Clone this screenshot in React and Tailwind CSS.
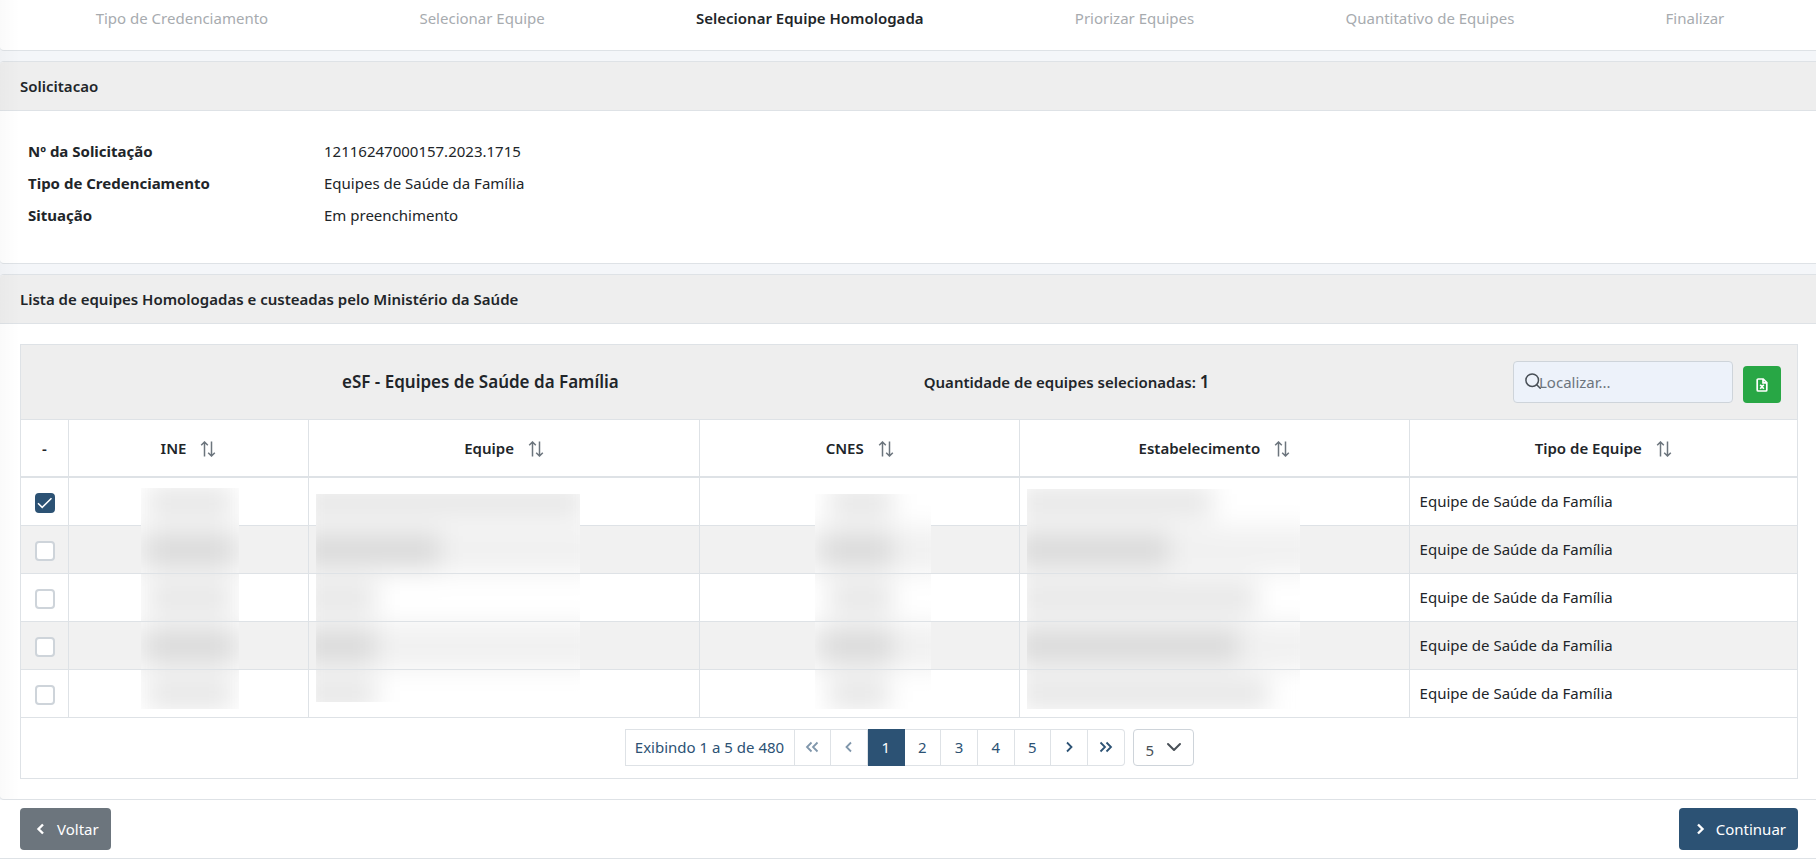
import React, { useState } from 'react';
import { ChevronDown } from 'lucide-react';

const steps = [
    'Tipo de Credenciamento',
    'Selecionar Equipe',
    'Selecionar Equipe Homologada',
    'Priorizar Equipes',
    'Quantitativo de Equipes',
    'Finalizar',
];

const details = [
    { label: 'Nº da Solicitação', value: '12116247000157.2023.1715' },
    { label: 'Tipo de Credenciamento', value: 'Equipes de Saúde da Família' },
    { label: 'Situação', value: 'Em preenchimento' },
];

const columns = ['INE', 'Equipe', 'CNES', 'Estabelecimento', 'Tipo de Equipe'];

const masks = [
    {
        box: 'left-[72px] top-[10px] w-[98px] h-[221px]',
        shift: '-top-[58px]',
        bars: ['ml-[26px] w-[86px]', 'ml-[26px] w-[86px]', 'ml-[26px] w-[86px]', 'ml-[26px] w-[86px]', 'ml-[26px] w-[86px]'],
    },
    {
        box: 'left-[7px] top-4 w-[264px] h-[208px]',
        shift: '-top-16',
        bars: ['ml-2 w-[280px]', 'ml-2 w-[136px]', 'ml-2 w-[72px]', 'ml-2 w-[72px]', 'ml-2 w-[72px]'],
    },
    {
        box: 'left-[115px] top-4 w-[116px] h-[215px]',
        shift: '-top-16',
        bars: ['ml-[34px] w-[64px]', 'ml-[28px] w-[70px]', 'ml-[34px] w-[64px]', 'ml-[28px] w-[70px]', 'ml-[34px] w-[60px]'],
    },
    {
        box: 'left-[7px] top-[11px] w-[273px] h-[220px]',
        shift: '-top-[59px]',
        bars: ['ml-3 w-[194px]', 'ml-3 w-[150px]', 'ml-3 w-[238px]', 'ml-3 w-[220px]', 'ml-3 w-[250px]'],
    },
];

const Mask = ({ box, shift, bars }) => (
    <div className={`absolute overflow-hidden bg-white ${box}`} aria-hidden="true">
        <div className={`absolute -left-5 -right-5 blur-[12px] ${shift}`}>
            <div className="h-12 bg-white" />
            {bars.map((bar, i) => (
                <div key={i} className="flex h-12 items-center bg-white odd:bg-[#f1f1f1]">
                    <div className={`flex h-12 items-center bg-black/[0.03] ${bar}`}>
                        <div className="h-5 w-full bg-black/[0.08]" />
                    </div>
                </div>
            ))}
            <div className="h-12 bg-white" />
        </div>
    </div>
);

const SortIcon = () => (
    <svg className="mt-0.5 h-4 w-4 text-[#6c757d]" viewBox="0 0 16 16" fill="none" stroke="currentColor" strokeWidth="1.5" aria-hidden="true">
        <path d="M4.5 15.5V1M1.2 4.3 4.5 1l3.3 3.3M11.5.5V15M8.2 11.7l3.3 3.3 3.3-3.3" />
    </svg>
);

const Chevron = ({ left, double, bold }) => (
    <svg
        className={`h-3 ${double ? 'w-4' : 'w-3'} ${left ? 'rotate-180' : ''}`}
        viewBox={double ? '0 0 16 12' : '0 0 12 12'}
        fill="none"
        stroke="currentColor"
        strokeWidth={bold ? 2.4 : 1.8}
        aria-hidden="true"
    >
        {double ? <path d="m2.5 1.5 4.5 4.5-4.5 4.5M8.5 1.5 13 6l-4.5 4.5" /> : <path d="M4 1.5 8.5 6 4 10.5" />}
    </svg>
);

const Panel = ({ title, children }) => (
    <section className="overflow-hidden rounded-l border-y border-[#dee2e6] bg-white">
        <h2 className="border-b border-[#dee2e6] bg-[#eee] px-5 py-3 font-semibold">{title}</h2>
        {children}
    </section>
);

const pageButton = 'flex h-[37px] flex-1 items-center justify-center border border-l-0 border-[#dee2e6] pb-0.5';

const App = () => {
    const [selected, setSelected] = useState([0]);

    const toggle = (row) =>
        setSelected(selected.includes(row) ? selected.filter((r) => r !== row) : [...selected, row]);

    return (
        <div className="relative bg-[#f4f6f9] font-['Noto_Sans','Open_Sans',sans-serif] text-[15px] leading-6 text-[#212529]">
            <div className="flex flex-col gap-2.5">
                <nav className="flex justify-around rounded-bl border-b border-[#dee2e6] bg-white pt-1.5 pr-4 pb-5 pl-5">
                    {steps.map((step, i) => (
                        <a key={step} href="#" className={i === 2 ? 'font-semibold' : 'text-[#a7abaf]'}>
                            {step}
                        </a>
                    ))}
                </nav>

                <Panel title="Solicitacao">
                    <dl className="px-7 pt-6 pb-8">
                        {details.map(({ label, value }) => (
                            <div key={label} className="flex py-1">
                                <dt className="w-[296px] font-bold">{label}</dt>
                                <dd>{value}</dd>
                            </div>
                        ))}
                    </dl>
                </Panel>

                <Panel title="Lista de equipes Homologadas e custeadas pelo Ministério da Saúde">
                    <div className="py-5 pr-[18px] pl-5">
                        <div className="grid grid-cols-[889fr_282fr_573fr] items-center border border-[#dee2e6] bg-[#eee] px-4 py-4">
                            <h3 className="text-center text-[17px] font-semibold">eSF - Equipes de Saúde da Família</h3>
                            <p className="text-center font-semibold whitespace-nowrap">
                                Quantidade de equipes selecionadas: <span className="text-[17px]">{selected.length}</span>
                            </p>
                            <div className="flex items-end justify-end gap-2.5">
                                <div className="relative">
                                    <svg className="absolute top-3 left-3 h-4 w-4 text-[#495057]" viewBox="0 0 16 16" fill="none" stroke="currentColor" strokeWidth="1.5" aria-hidden="true">
                                        <circle cx="7.2" cy="7.2" r="6.3" />
                                        <path d="m11.7 11.7 4 4" />
                                    </svg>
                                    <input
                                        type="text"
                                        aria-label="Localizar"
                                        placeholder="Localizar..."
                                        className="block h-[42px] w-[220px] rounded border border-[#ced4da] bg-[#edf2fa] pr-3 pl-[25px] placeholder:text-[#6c757d]"
                                    />
                                </div>
                                <button aria-label="Exportar para Excel" className="flex h-[37px] w-[38px] items-center justify-center rounded bg-[#28a745] text-white">
                                    <svg className="h-3.5 w-3" viewBox="0 0 12 14" fill="none" stroke="currentColor" strokeWidth="1.7" aria-hidden="true">
                                        <path d="M7.2 1H2.2a1 1 0 0 0-1 1v10a1 1 0 0 0 1 1h7.6a1 1 0 0 0 1-1V4.6zM7 1v3.8h3.8M4.2 6.8l3.6 4M7.8 6.8l-3.6 4" />
                                    </svg>
                                </button>
                            </div>
                        </div>

                        <table className="w-full table-fixed border-separate border-spacing-0">
                            <colgroup>
                                <col className="w-[49px]" />
                                <col className="w-[240px]" />
                                <col className="w-[22%]" />
                                <col className="w-[18%]" />
                                <col className="w-[21.9%]" />
                                <col />
                            </colgroup>
                            <thead>
                                <tr>
                                    <th className="h-[58px] border-x border-b-2 border-[#dee2e6] font-semibold">-</th>
                                    {columns.map((column) => (
                                        <th key={column} className="border-r border-b-2 border-[#dee2e6] font-semibold">
                                            <span className="flex items-center justify-center gap-3.5">
                                                {column}
                                                <SortIcon />
                                            </span>
                                        </th>
                                    ))}
                                </tr>
                            </thead>
                            <tbody>
                                {[0, 1, 2, 3, 4].map((row) => (
                                    <tr key={row} className="even:bg-[#f1f1f1]">
                                        <td className="h-12 border-x border-b border-[#dee2e6] pt-0.5">
                                            <label className="relative mx-auto block h-5 w-5">
                                                <input
                                                    type="checkbox"
                                                    aria-label={`Selecionar equipe ${row + 1}`}
                                                    checked={selected.includes(row)}
                                                    onChange={() => toggle(row)}
                                                    className="peer block h-5 w-5 appearance-none rounded border-2 border-[#ced4da] bg-white checked:border-[#2c5274] checked:bg-[#2c5274]"
                                                />
                                                <svg className="pointer-events-none absolute top-0 left-0 hidden h-5 w-5 text-white peer-checked:block" viewBox="0 0 20 20" fill="none" stroke="currentColor" strokeWidth="1.5" aria-hidden="true">
                                                    <path d="m3 10.2 4.2 4.2L16.5 5.2" />
                                                </svg>
                                            </label>
                                        </td>
                                        {masks.map((mask, i) => (
                                            <td key={i} className="relative border-r border-b border-[#dee2e6]">
                                                {row === 0 && <Mask {...mask} />}
                                            </td>
                                        ))}
                                        <td className="border-r border-b border-[#dee2e6] px-2.5 pb-0.5">Equipe de Saúde da Família</td>
                                    </tr>
                                ))}
                            </tbody>
                        </table>

                        <div className="flex items-center justify-center border-x border-b border-[#dee2e6] pt-[11px] pb-3 text-[#2c5274]">
                            <span className="flex h-[37px] w-[170px] items-center justify-center border border-[#dee2e6] pb-0.5 whitespace-nowrap">
                                Exibindo 1 a 5 de 480
                            </span>
                            <div className="flex w-[330px]">
                                <button aria-label="Primeira página" disabled className={pageButton}>
                                    <span className="opacity-60"><Chevron left double /></span>
                                </button>
                                <button aria-label="Página anterior" disabled className={pageButton}>
                                    <span className="opacity-60"><Chevron left /></span>
                                </button>
                                <button className="h-[37px] flex-1 border-r border-[#2c5274] bg-[#2c5274] pb-0.5 text-white">1</button>
                                {[2, 3, 4, 5].map((page) => (
                                    <button key={page} className={pageButton}>{page}</button>
                                ))}
                                <button aria-label="Próxima página" className={pageButton}>
                                    <Chevron />
                                </button>
                                <button aria-label="Última página" className={`${pageButton} rounded-r`}>
                                    <Chevron double />
                                </button>
                            </div>
                            <div className="relative ml-2 text-[#495057]">
                                <select aria-label="Itens por página" defaultValue="5" className="block h-[37px] w-[61px] appearance-none rounded border border-[#ced4da] bg-white pt-1 pl-3">
                                    <option>5</option>
                                    <option>10</option>
                                    <option>20</option>
                                </select>
                                <ChevronDown size={24} strokeWidth={2} className="pointer-events-none absolute top-1.5 right-2" />
                            </div>
                        </div>
                    </div>
                </Panel>
            </div>

            <footer className="flex justify-between border-b border-[#dee2e6] bg-white py-2 pr-[18px] pl-5 text-white">
                <button className="flex h-[42px] items-center gap-2.5 rounded bg-[#6c757d] px-3">
                    <span className="pl-[3px]"><Chevron left bold /></span>
                    Voltar
                </button>
                <button className="flex h-[42px] items-center gap-2.5 rounded bg-[#2c5274] px-3">
                    <span className="pl-[3px]"><Chevron bold /></span>
                    Continuar
                </button>
            </footer>

            {/* soft shadow cast by the side menu */}
            <div className="pointer-events-none absolute top-0 bottom-15 left-0 w-5 bg-linear-to-r from-black/[0.02] to-transparent" />
        </div>
    );
};

export default App;
